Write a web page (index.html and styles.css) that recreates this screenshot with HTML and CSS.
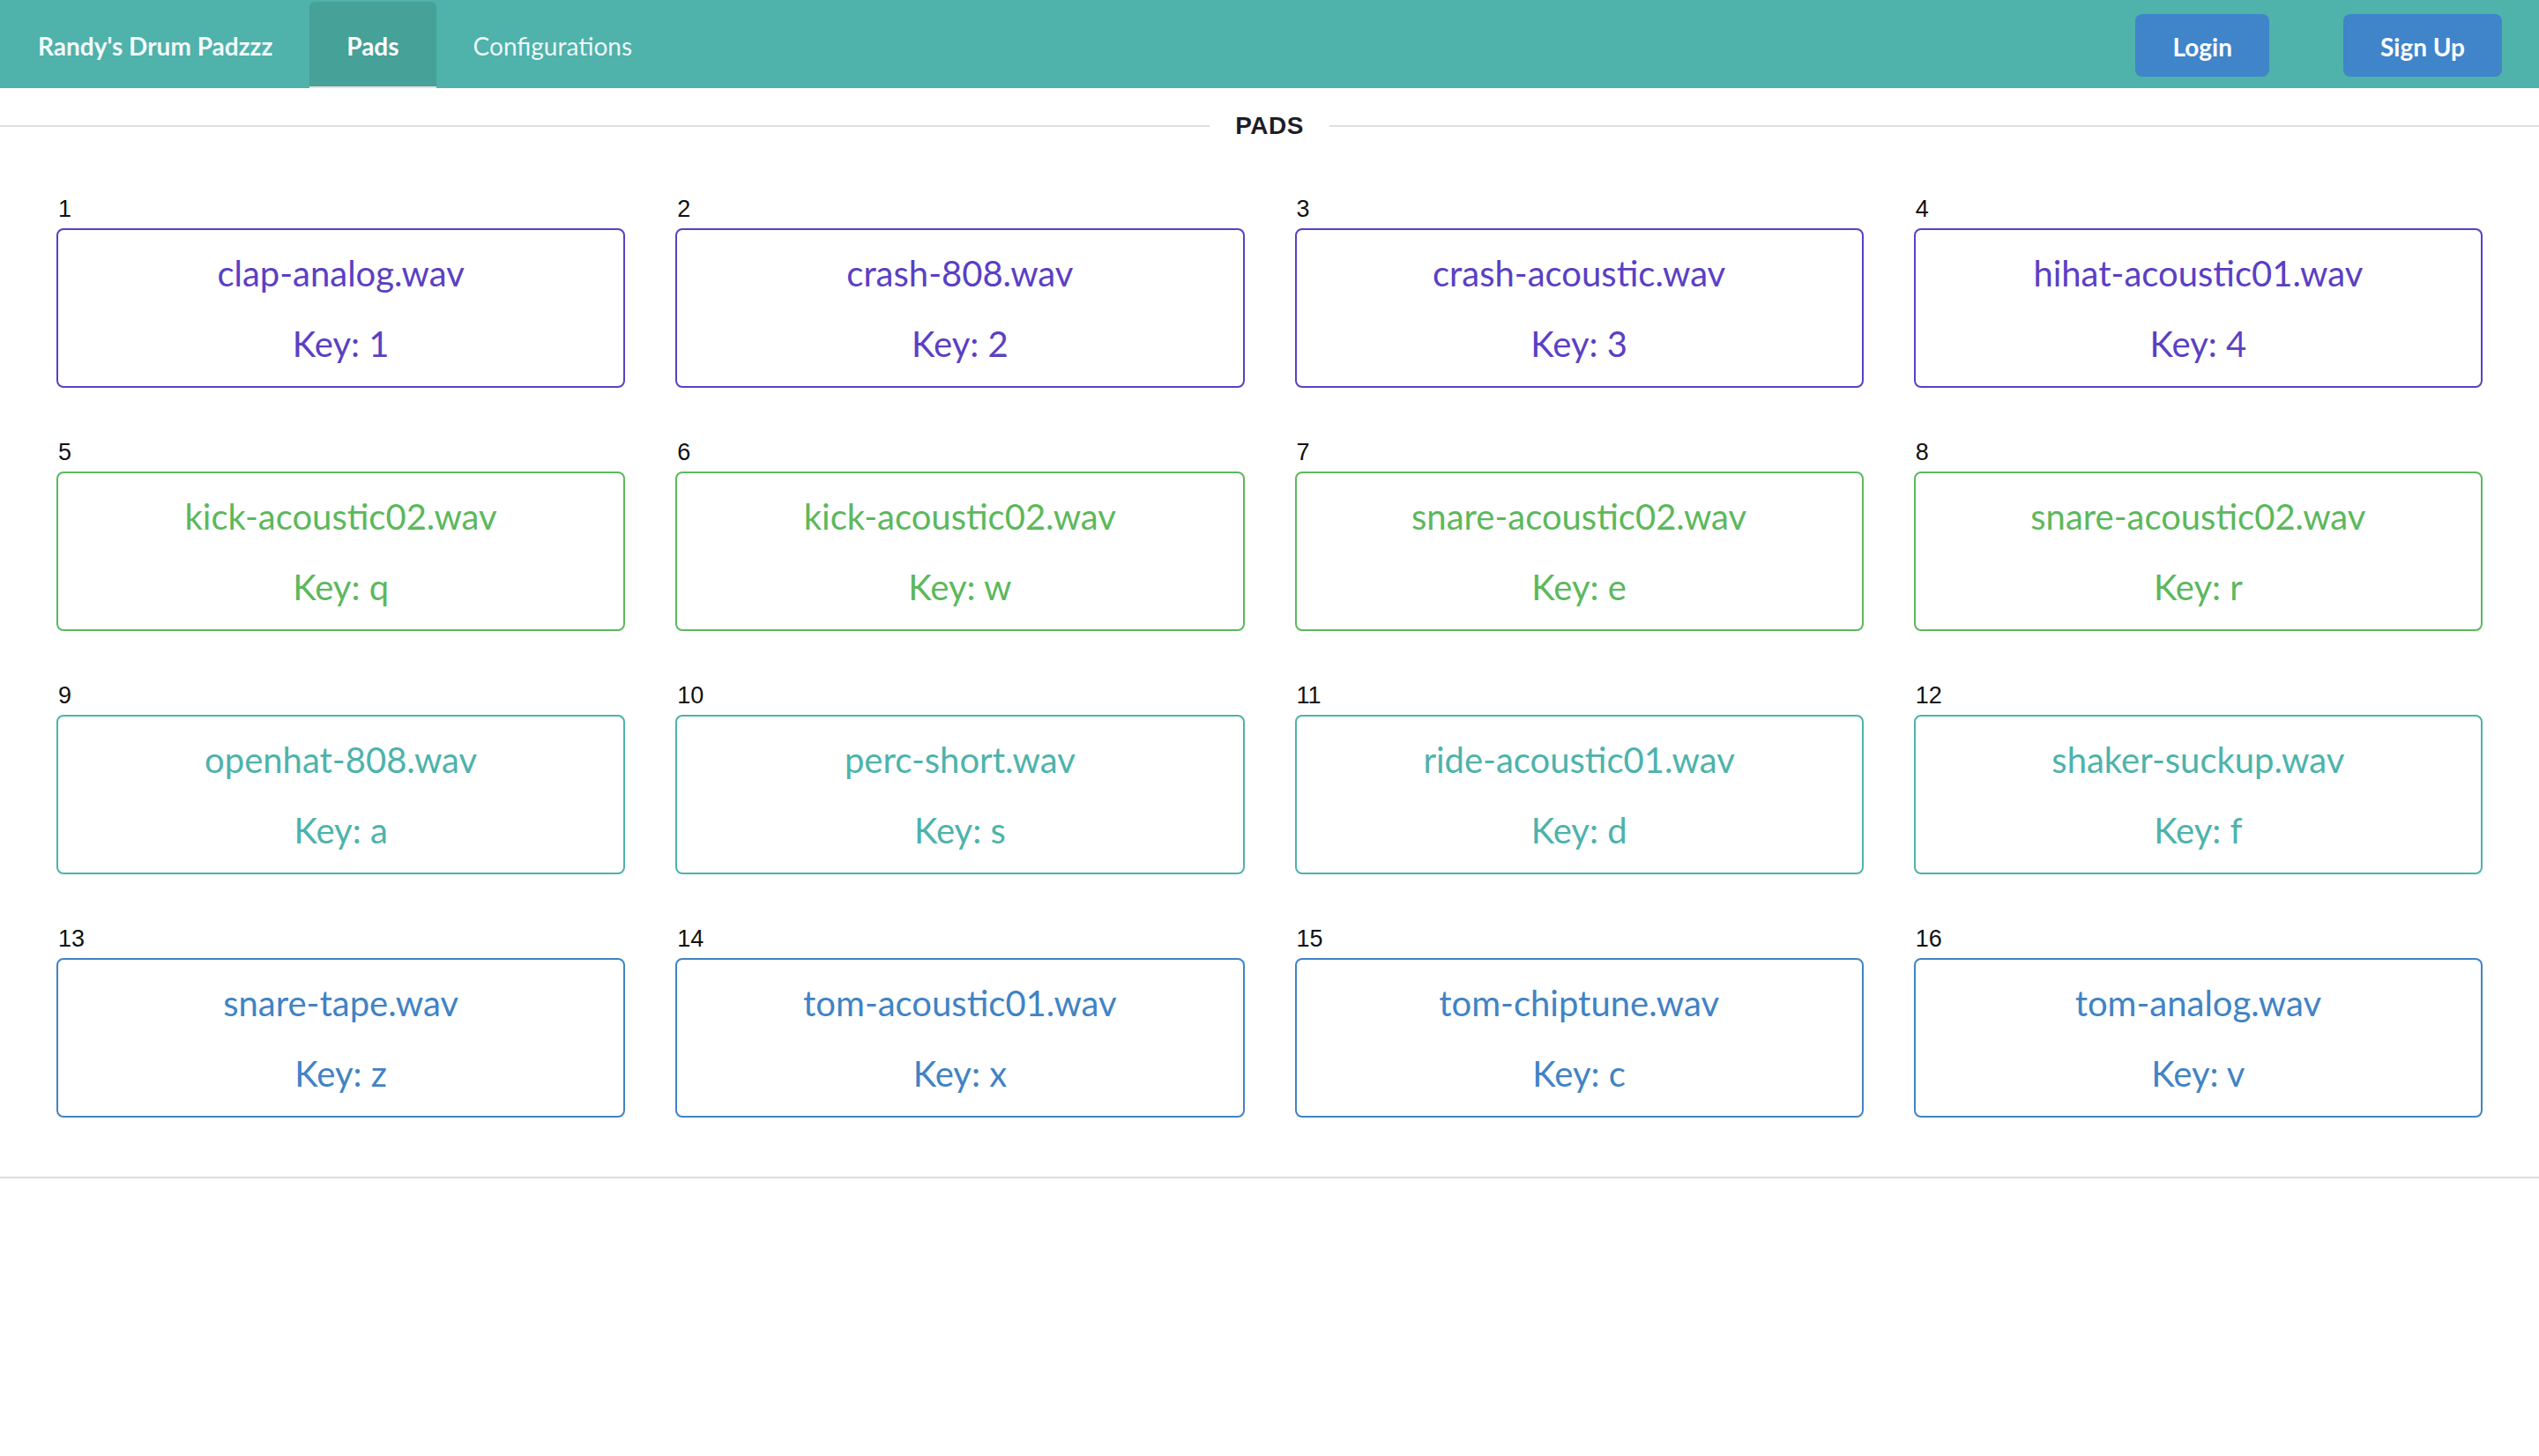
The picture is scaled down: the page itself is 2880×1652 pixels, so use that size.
FILE: index.html
```html
<!DOCTYPE html>
<html lang="en">
<head>
<meta charset="utf-8">
<title>Randy's Drum Padzzz</title>
<link rel="stylesheet" href="styles.css">
</head>
<body>
<nav class="navbar">
  <div class="nav-item brand">Randy's Drum Padzzz</div>
  <a class="nav-item tab active">Pads</a>
  <a class="nav-item tab">Configurations</a>
  <div class="spacer"></div>
  <div class="nav-item btn-wrap"><button class="btn">Login</button></div>
  <div class="nav-item btn-wrap"><button class="btn">Sign Up</button></div>
</nav>
<main class="main">
  <div class="divider"><span class="divider-text">Pads</span></div>
  <section class="grid">
    <div class="cell"><div class="num">1</div><div class="pad violet"><div class="name">clap-analog.wav</div><div class="key">Key: 1</div></div></div>
    <div class="cell"><div class="num">2</div><div class="pad violet"><div class="name">crash-808.wav</div><div class="key">Key: 2</div></div></div>
    <div class="cell"><div class="num">3</div><div class="pad violet"><div class="name">crash-acoustic.wav</div><div class="key">Key: 3</div></div></div>
    <div class="cell"><div class="num">4</div><div class="pad violet"><div class="name">hihat-acoustic01.wav</div><div class="key">Key: 4</div></div></div>

    <div class="cell"><div class="num">5</div><div class="pad green"><div class="name">kick-acoustic02.wav</div><div class="key">Key: q</div></div></div>
    <div class="cell"><div class="num">6</div><div class="pad green"><div class="name">kick-acoustic02.wav</div><div class="key">Key: w</div></div></div>
    <div class="cell"><div class="num">7</div><div class="pad green"><div class="name">snare-acoustic02.wav</div><div class="key">Key: e</div></div></div>
    <div class="cell"><div class="num">8</div><div class="pad green"><div class="name">snare-acoustic02.wav</div><div class="key">Key: r</div></div></div>

    <div class="cell"><div class="num">9</div><div class="pad teal"><div class="name">openhat-808.wav</div><div class="key">Key: a</div></div></div>
    <div class="cell"><div class="num">10</div><div class="pad teal"><div class="name">perc-short.wav</div><div class="key">Key: s</div></div></div>
    <div class="cell"><div class="num">11</div><div class="pad teal"><div class="name">ride-acoustic01.wav</div><div class="key">Key: d</div></div></div>
    <div class="cell"><div class="num">12</div><div class="pad teal"><div class="name">shaker-suckup.wav</div><div class="key">Key: f</div></div></div>

    <div class="cell"><div class="num">13</div><div class="pad blue"><div class="name">snare-tape.wav</div><div class="key">Key: z</div></div></div>
    <div class="cell"><div class="num">14</div><div class="pad blue"><div class="name">tom-acoustic01.wav</div><div class="key">Key: x</div></div></div>
    <div class="cell"><div class="num">15</div><div class="pad blue"><div class="name">tom-chiptune.wav</div><div class="key">Key: c</div></div></div>
    <div class="cell"><div class="num">16</div><div class="pad blue"><div class="name">tom-analog.wav</div><div class="key">Key: v</div></div></div>
  </section>
  <hr class="bottom-rule">
</main>
</body>
</html>
```

FILE: styles.css
```css
* { box-sizing: border-box; }

html, body {
  margin: 0;
  padding: 0;
  background: #ffffff;
}

body {
  font-family: Lato, "Liberation Sans", sans-serif;
  color: #1b1c1d;
}

.navbar {
  display: flex;
  align-items: stretch;
  height: 100px;
  background: #4fb2ab;
}

.nav-item {
  display: flex;
  align-items: center;
  padding: 3px 42px 0;
  font-family: Lato, sans-serif;
  font-size: 28px;
  color: rgba(255, 255, 255, 0.92);
  text-decoration: none;
}

.brand {
  padding-left: 43px;
  font-weight: 700;
  color: #f3fbfa;
}

.tab {
  font-weight: 400;
}

.tab.active {
  margin-top: 2px;
  padding-top: 1px;
  font-weight: 700;
  color: #ffffff;
  background: #46a198;
  border-radius: 6px 6px 0 0;
  box-shadow: inset 0 -2px 0 #e8e2e2;
}

.spacer { flex: 1; }

.btn-wrap {
  padding: 16px 42px 13px;
  align-items: flex-start;
}

.btn {
  height: 71px;
  padding: 2px 42px 0;
  border: none;
  border-radius: 8px;
  background: #4084c9;
  color: #ffffff;
  font-family: Lato, sans-serif;
  font-weight: 700;
  font-size: 28px;
  cursor: pointer;
}

.main {
  display: flex;
  flex-direction: column;
}

.divider {
  display: flex;
  align-items: center;
  height: 40px;
  margin-top: 23px;
  margin-bottom: 59px;
}

.divider::before,
.divider::after {
  content: "";
  flex: 1;
  height: 2px;
  background: #dfdfdf;
}

.divider-text {
  padding: 0 29px;
  font-family: "Liberation Sans", Arial, sans-serif;
  font-weight: 700;
  font-size: 28px;
  line-height: 40px;
  text-transform: uppercase;
  letter-spacing: 0.5px;
  color: #1e1d26;
}

.grid {
  display: grid;
  grid-template-columns: repeat(4, 1fr);
  column-gap: 57px;
  row-gap: 58px;
  padding: 0 64px;
}

.num {
  font-family: "Liberation Sans", Arial, sans-serif;
  font-size: 27px;
  line-height: 30px;
  color: #111111;
  margin-bottom: 7px;
  padding-left: 2px;
}

.pad {
  height: 181px;
  border: 2px solid currentColor;
  border-radius: 8px;
  padding: 25px 0 24px;
  display: flex;
  flex-direction: column;
  align-items: center;
  font-family: Lato, sans-serif;
  font-size: 40px;
  line-height: 48px;
}

.pad .key {
  margin-top: 32px;
}

.violet { color: #5a40c4; }
.green  { color: #5cb85c; }
.teal   { color: #4db3ab; }
.blue   { color: #4183c4; }

.bottom-rule {
  width: 100%;
  margin: 67px 0 0;
  border: none;
  height: 2px;
  background: #dedede;
}
```
